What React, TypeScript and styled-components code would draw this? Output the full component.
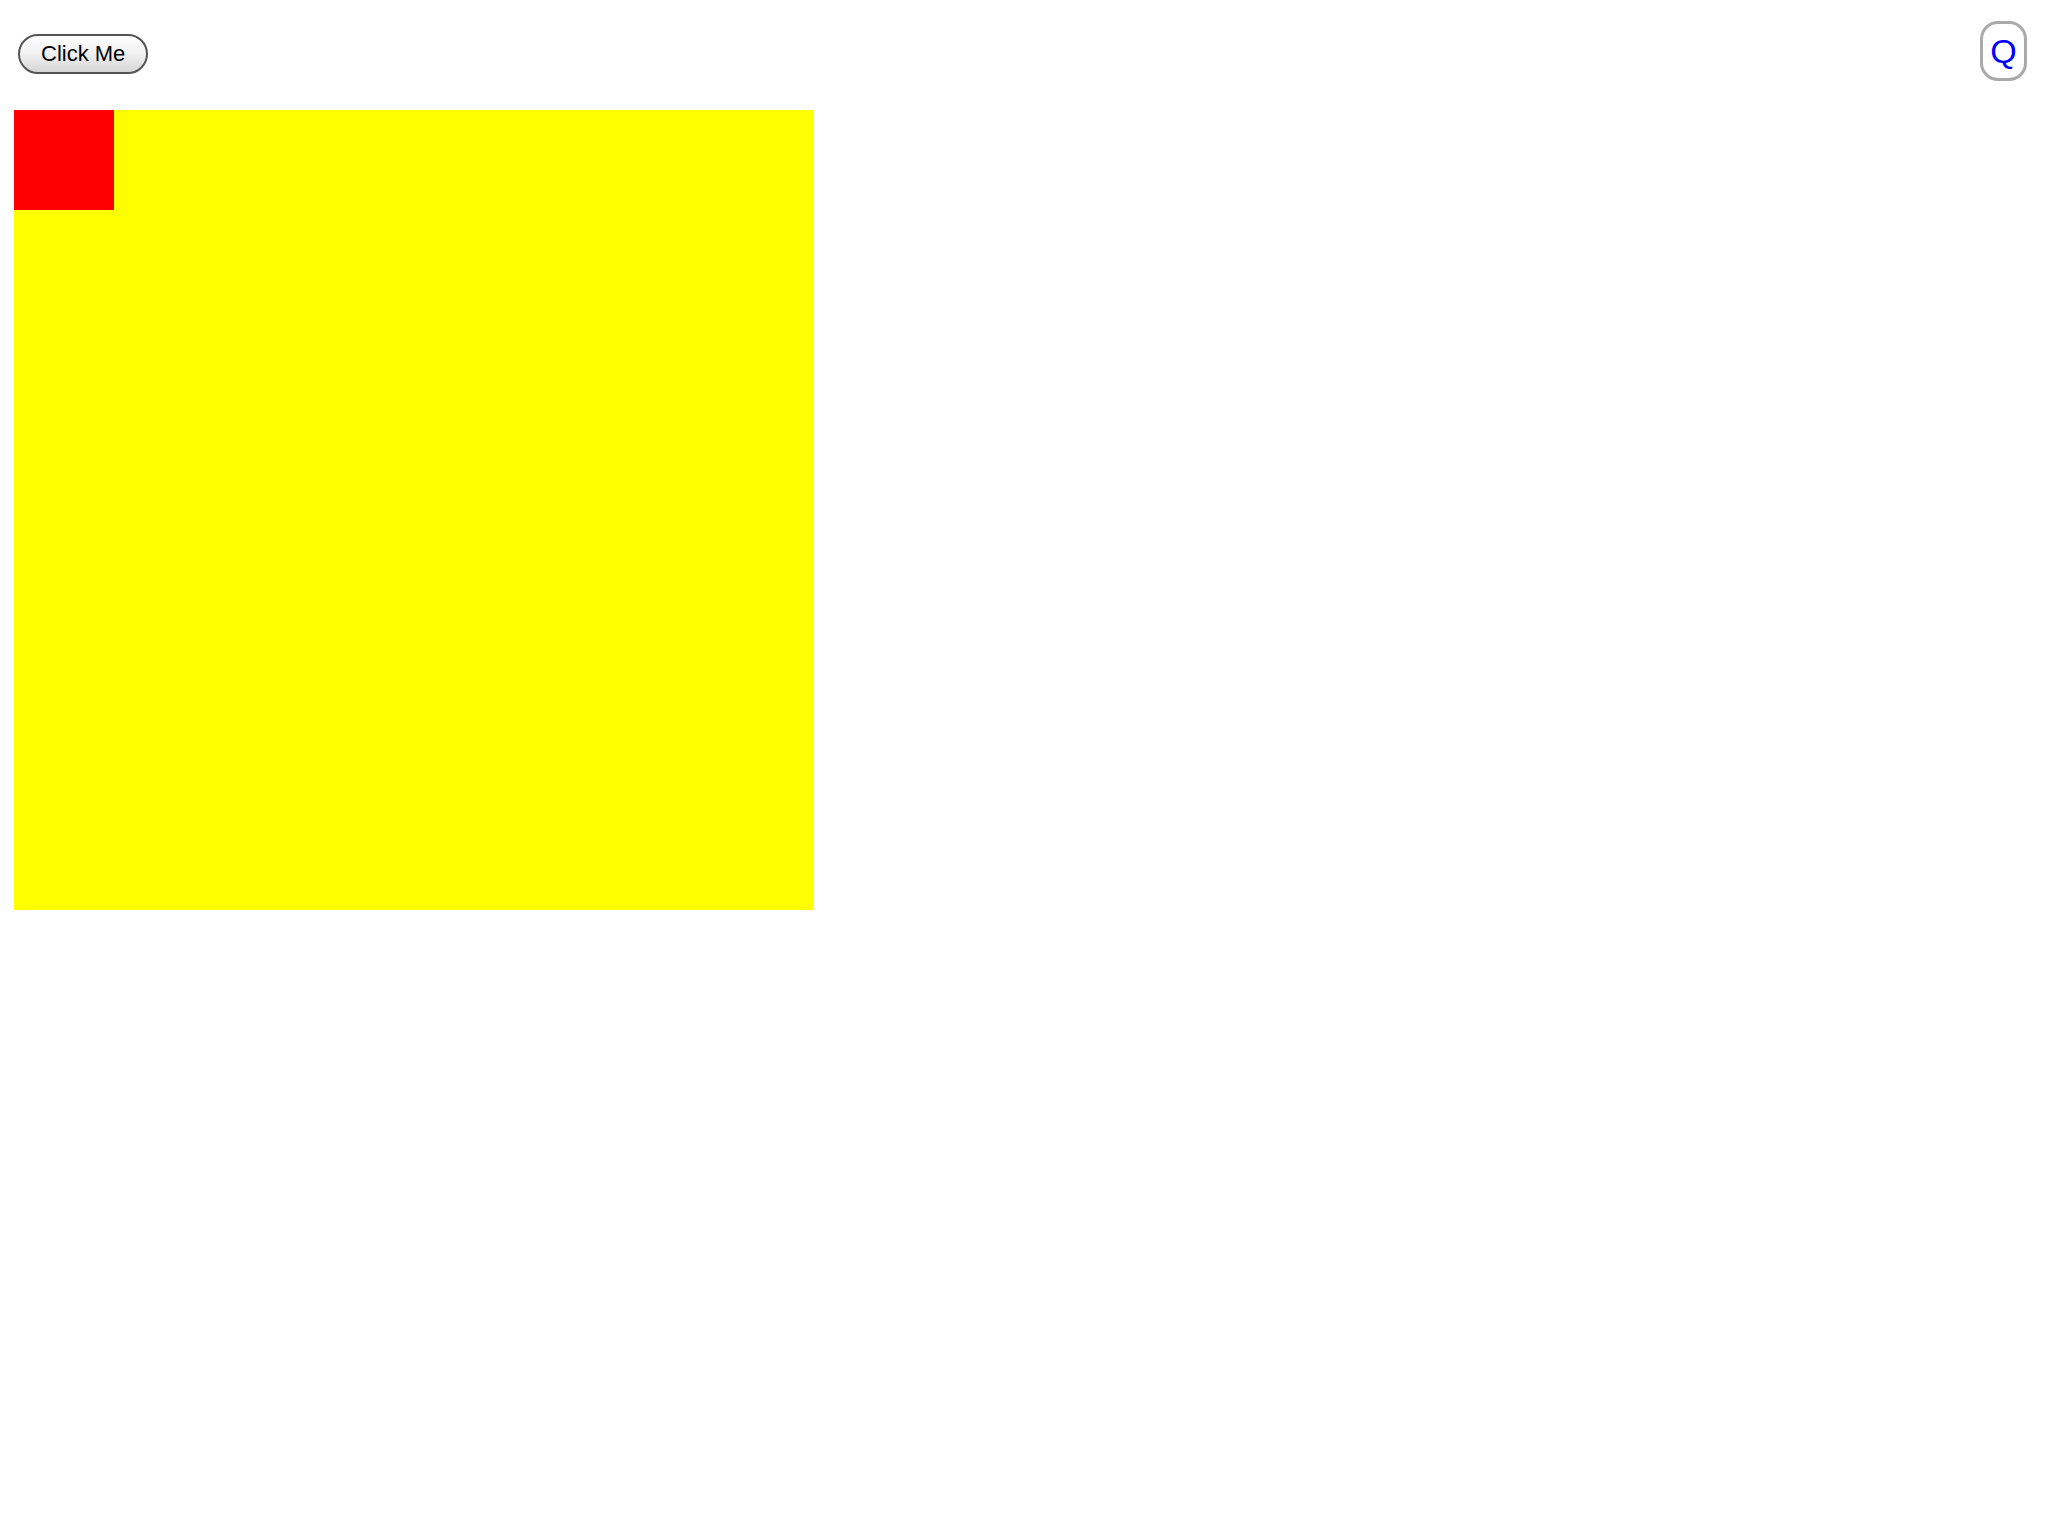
import styled, { createGlobalStyle } from 'styled-components';

const GlobalStyle = createGlobalStyle`
  html,
  body {
    margin: 0;
    padding: 0;
    background: #fff;
    font-family: 'Liberation Sans', Arial, sans-serif;
  }
`;

const Page = styled.div`
  width: 100vw;
  min-height: 100vh;

  display: flex;
  flex-direction: column;
`;

const Header = styled.div`
  padding: 21px 21px 0 18px;

  display: flex;
  align-items: flex-start;
  justify-content: space-between;
`;

const ClickButton = styled.button`
  height: 40px;
  margin-top: 13px;
  padding: 0 21px;

  box-sizing: border-box;

  font-family: 'Liberation Sans', Arial, sans-serif;
  font-size: 22px;
  color: #000;

  background: linear-gradient(180deg, #ffffff 0%, #f2f2f2 45%, #d6d6d6 100%);
  border: 2px solid #555;
  border-radius: 20px;

  cursor: pointer;
`;

const QButton = styled.button`
  width: 47px;
  height: 60px;
  padding: 0;

  box-sizing: border-box;

  display: flex;
  align-items: center;
  justify-content: center;

  font-family: 'Liberation Sans', Arial, sans-serif;
  font-size: 34px;
  color: #0000ff;

  background: #fff;
  border: 3px solid #aaa;
  border-radius: 18px;

  cursor: pointer;
`;

const Canvas = styled.div`
  width: 800px;
  height: 800px;
  margin: 29px 0 0 14px;

  background: #ffff00;
`;

const Square = styled.div`
  width: 100px;
  height: 100px;

  background: #ff0000;
`;

export default function App() {
  return (
    <>
      <GlobalStyle />
      <Page>
        <Header>
          <ClickButton>Click Me</ClickButton>
          <QButton>Q</QButton>
        </Header>
        <Canvas>
          <Square />
        </Canvas>
      </Page>
    </>
  );
}
